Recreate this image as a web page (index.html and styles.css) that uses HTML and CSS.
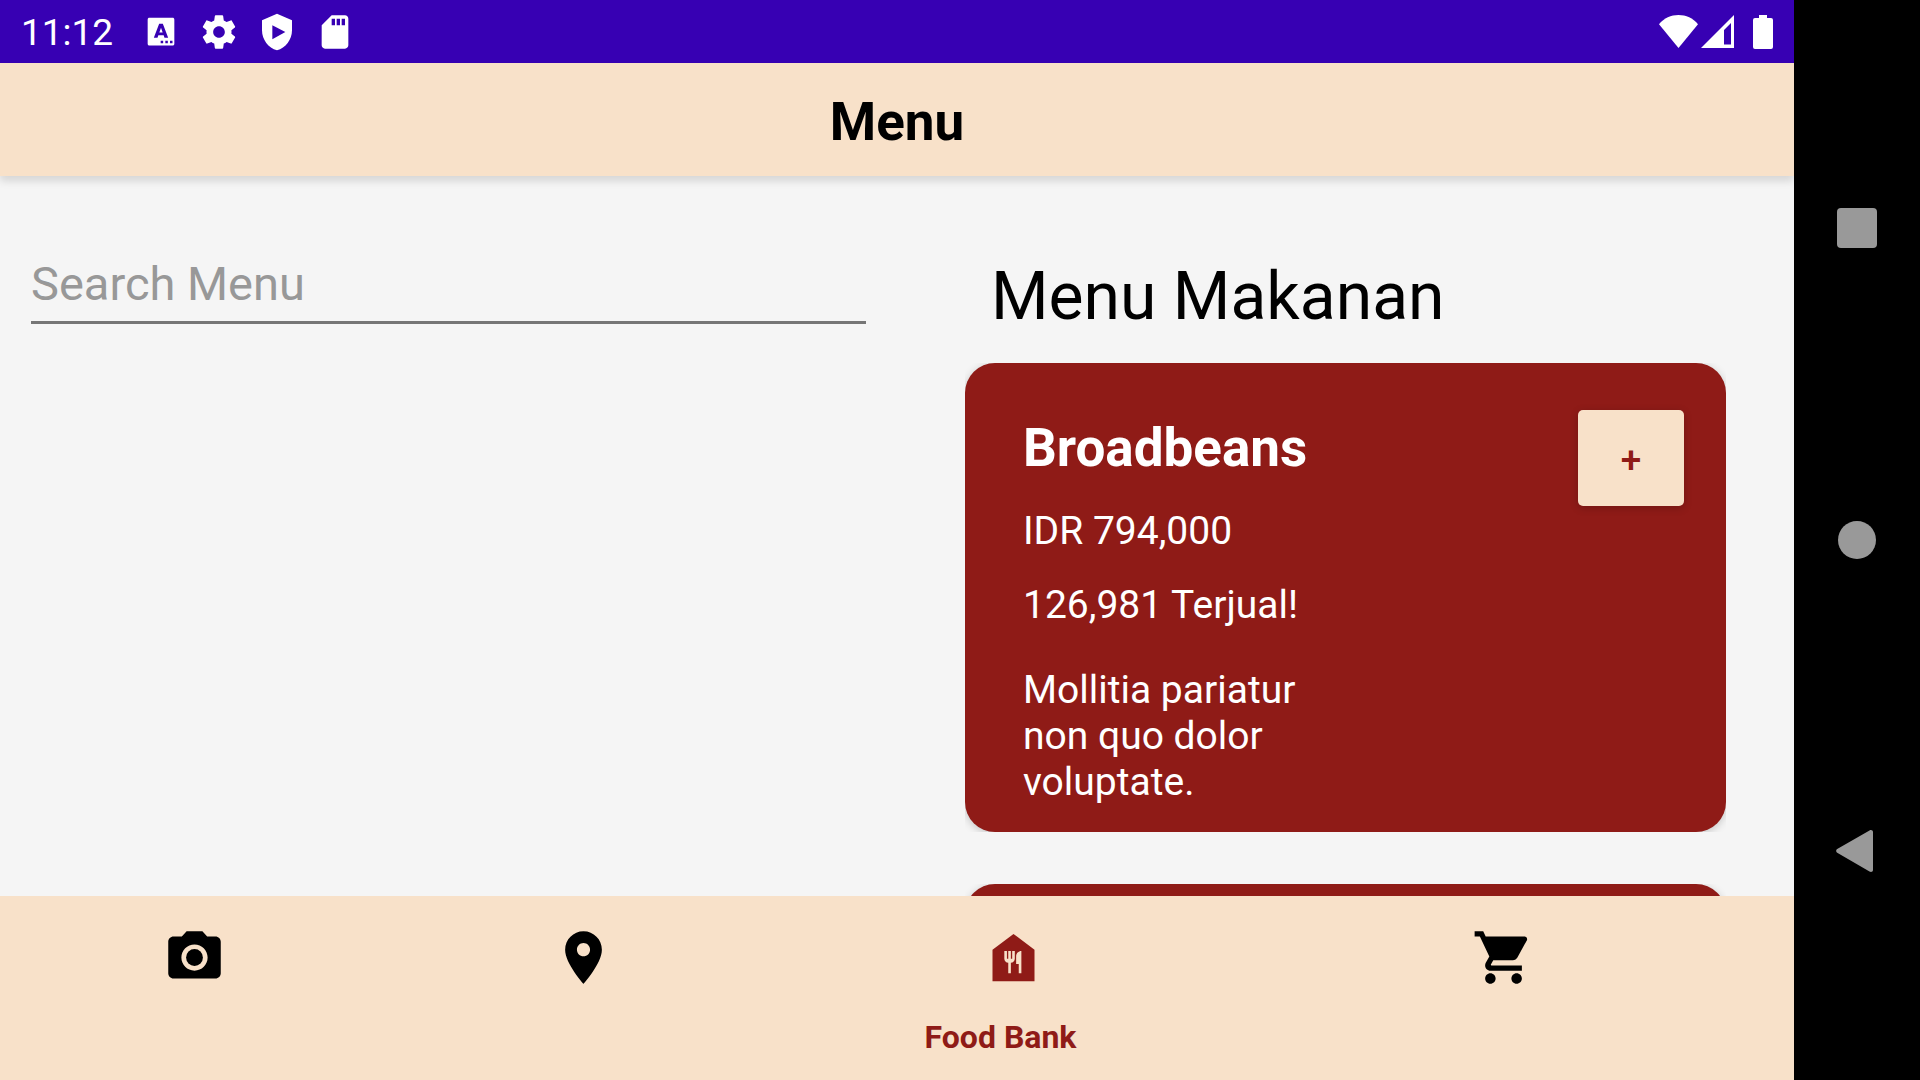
FILE: index.html
```html
<!DOCTYPE html>
<html lang="id">
<head>
  <meta charset="utf-8">
  <meta name="viewport" content="width=device-width, initial-scale=1">
  <title>Menu</title>
  <link rel="stylesheet" href="styles.css">
</head>
<body>
  <div class="device">
    <div class="app">
      <div class="status-bar">
        <time class="clock">11:12</time>
        <div class="status-icons">
          <svg class="status-icon" viewBox="0 0 24 24"><path fill-rule="evenodd" d="M5.100 3.500h13.800c.7 0 1.100.4 1.100 1.100v14.400c0 .7-.4 1.100-1.100 1.100H5.100c-.7 0-1.100-.4-1.100-1.100V4.600c0-.7.4-1.100 1.100-1.100zM10.900 7 7.700 15.500h2.200l.5-1.600h3.200l.5 1.600h2.200L13.100 7zM12 9.400l1 2.900h-2zM11.800 17.300v1.500h1.500v-1.500zM14.600 17.300v1.500h1.500v-1.500zM17.400 17.300v1.500h1.500v-1.500z"/></svg>
          <svg class="status-icon" viewBox="0 0 24 24"><path d="M19.430 12.980c.04-.32.07-.64.07-.98s-.03-.66-.07-.98l2.110-1.650c.19-.15.24-.42.12-.64l-2-3.460c-.12-.22-.39-.3-.61-.22l-2.490 1c-.52-.4-1.080-.73-1.690-.98l-.38-2.650C14.460 2.180 14.250 2 14 2h-4c-.25 0-.46.18-.49.42l-.38 2.650c-.61.25-1.170.59-1.690.98l-2.490-1c-.23-.09-.49 0-.61.22l-2 3.460c-.13.22-.07.49.12.64l2.110 1.650c-.04.32-.07.65-.07.98s.03.66.07.98l-2.110 1.650c-.19.15-.24.42-.12.64l2 3.460c.12.22.39.3.61.22l2.490-1c.52.4 1.080.73 1.690.98l.38 2.650c.03.24.24.42.49.42h4c.25 0 .46-.18.49-.42l.38-2.650c.61-.25 1.170-.59 1.690-.98l2.490 1c.23.09.49 0 .61-.22l2-3.460c.12-.22.07-.49-.12-.64l-2.110-1.650zM12 15.500c-1.930 0-3.500-1.570-3.500-3.500s1.570-3.500 3.500-3.500 3.500 1.570 3.500 3.500-1.570 3.500-3.500 3.500z"/></svg>
          <svg class="status-icon" viewBox="0 0 24 24"><path fill-rule="evenodd" d="M12 1 3 5v6c0 5.550 3.840 10.740 9 12 5.160-1.260 9-6.450 9-12V5l-9-4zM9.200 7.900 17 12l-7.800 4.300z"/></svg>
          <svg class="status-icon" viewBox="0 0 24 24"><path d="M18 2h-8L4.020 8 4 20c0 1.100.9 2 2 2h12c1.100 0 2-.9 2-2V4c0-1.100-.9-2-2-2zm-6 6h-2V4h2v4zm3 0h-2V4h2v4zm3 0h-2V4h2v4z"/></svg>
        </div>
        <div class="system-icons">
          <svg class="wifi" viewBox="0 0 39 33"><path d="M19.500 33 0 9.200C5 3 12 0 19.500 0S34 3 39 9.200z"/></svg>
          <svg class="signal" viewBox="0 0 33 33"><path fill-rule="evenodd" d="M33 0v33H0zM30 8l-7 7v14.500h7z"/></svg>
          <svg class="battery" viewBox="0 0 20 34"><path d="M6 0h8v3h4a2 2 0 0 1 2 2v27a2 2 0 0 1-2 2H2a2 2 0 0 1-2-2V5a2 2 0 0 1 2-2h4z"/></svg>
        </div>
      </div>

      <header class="toolbar">
        <h1 class="toolbar-title">Menu</h1>
      </header>

      <main class="content">
        <form class="search">
          <input class="search-input" type="text" placeholder="Search Menu" aria-label="Search Menu">
        </form>
        <section class="menu">
          <h2 class="menu-title">Menu Makanan</h2>
          <ul class="menu-list">
            <li class="menu-item">
              <article class="card">
                <div class="card-text">
                  <h3 class="card-name">Broadbeans</h3>
                  <p class="card-price">IDR 794,000</p>
                  <p class="card-sold">126,981 Terjual!</p>
                  <p class="card-description">Mollitia pariatur non quo dolor voluptate.</p>
                </div>
                <button class="add-button" type="button">+</button>
              </article>
            </li>
            <li class="menu-item">
              <article class="card"></article>
            </li>
          </ul>
        </section>
      </main>

      <nav class="tabs">
        <a class="tab" href="#camera" aria-label="Camera">
          <svg class="tab-icon" viewBox="0 0 24 24"><circle cx="12" cy="12" r="3.200"/><path d="M9 2 7.170 4H4c-1.100 0-2 .9-2 2v12c0 1.100.9 2 2 2h16c1.100 0 2-.9 2-2V6c0-1.100-.9-2-2-2h-3.170L15 2H9zm3 15c-2.760 0-5-2.240-5-5s2.240-5 5-5 5 2.240 5 5-2.240 5-5 5z"/></svg>
        </a>
        <a class="tab" href="#location" aria-label="Location">
          <svg class="tab-icon" viewBox="0 0 24 24"><path d="M12 2C8.130 2 5 5.130 5 9c0 5.250 7 13 7 13s7-7.750 7-13c0-3.870-3.130-7-7-7zm0 9.500c-1.380 0-2.500-1.120-2.500-2.500s1.120-2.500 2.500-2.500 2.500 1.120 2.500 2.500-1.120 2.500-2.500 2.500z"/></svg>
        </a>
        <a class="tab tab-active" href="#food-bank" aria-current="page">
          <svg class="tab-icon" viewBox="0 0 24 24"><path fill-rule="evenodd" d="M12 3 4 9v12h16V9zM12.500 12.500c0 .83-.67 1.500-1.500 1.500v4h-1v-4c-.83 0-1.500-.67-1.500-1.500v-3h1v3h.5v-3h1v3h.5v-3h1zM15 18h-1v-3.500h-1v-3c0-1.100.9-2 2-2z"/></svg>
          <span class="tab-label">Food Bank</span>
        </a>
        <a class="tab" href="#cart" aria-label="Cart">
          <svg class="tab-icon" viewBox="0 0 24 24"><path d="M7 18c-1.100 0-1.990.9-1.990 2S5.900 22 7 22s2-.9 2-2-.9-2-2-2zM1 2v2h2l3.600 7.590-1.350 2.450c-.16.28-.25.61-.25.96 0 1.100.9 2 2 2h12v-2H7.420c-.14 0-.25-.11-.25-.25l.03-.12.9-1.630h7.450c.75 0 1.410-.41 1.750-1.030l3.580-6.490c.08-.14.12-.31.12-.48 0-.55-.45-1-1-1H5.210l-.94-2H1zm16 16c-1.100 0-1.990.9-1.990 2s.89 2 1.990 2 2-.9 2-2-.9-2-2-2z"/></svg>
        </a>
      </nav>
    </div>

    <div class="system-nav">
      <button class="system-button" type="button" aria-label="Recent apps"><svg class="system-glyph" viewBox="0 0 42 42"><rect x="1" y="1" width="40" height="40" rx="4"/></svg></button>
      <button class="system-button" type="button" aria-label="Home"><svg class="system-glyph" viewBox="0 0 42 42"><circle cx="21" cy="21" r="19"/></svg></button>
      <button class="system-button" type="button" aria-label="Back"><svg class="system-glyph" viewBox="0 0 42 42"><path d="M1.200 18 33.500-.6C35.200-1.500 37-.7 37 1v38c0 1.700-1.800 2.500-3.500 1.600L1.200 21.700C-.2 20.900-.2 18.800 1.200 18z"/></svg></button>
    </div>
  </div>
</body>
</html>
```

FILE: styles.css
```css
:root {
  --cream: #f8e1c9;
  --maroon: #8f1b17;
  --surface: #f5f5f5;
  --indigo: #3700b3;
}

* {
  box-sizing: border-box;
  margin: 0;
  padding: 0;
}

body {
  font-family: Roboto, "Liberation Sans", sans-serif;
  color: #000;
  background: #000;
}

button,
input {
  font: inherit;
  border: 0;
  background: none;
}

svg {
  display: block;
  fill: currentColor;
  overflow: visible;
}

.device {
  display: flex;
  height: 100vh;
}

.app {
  flex: 1;
  min-width: 0;
  display: flex;
  flex-direction: column;
  background: var(--surface);
}

/* Status bar */

.status-bar {
  flex: none;
  display: flex;
  align-items: center;
  height: 63px;
  padding: 0 21px;
  color: #fff;
  background: var(--indigo);
}

.clock {
  padding-top: 2px;
  font-size: 37px;
  line-height: 44px;
}

.status-icons {
  display: flex;
  gap: 18px;
  margin-left: 28px;
}

.status-icon {
  width: 40px;
  height: 40px;
}

.system-icons {
  display: flex;
  align-items: center;
  margin-left: auto;
}

.wifi {
  width: 39px;
  height: 33px;
}

.signal {
  width: 33px;
  height: 33px;
  margin-left: 3px;
}

.battery {
  width: 20px;
  height: 34px;
  margin-left: 19px;
}

/* Toolbar */

.toolbar {
  flex: none;
  position: relative;
  z-index: 1;
  padding: 28px 0 23px;
  text-align: center;
  background: var(--cream);
  box-shadow: 0 5px 8px rgba(0, 0, 0, 0.13);
}

.toolbar-title {
  font-size: 53px;
  line-height: 62px;
  font-weight: 700;
}

/* Content */

.content {
  flex: 1;
  min-height: 0;
  overflow: hidden;
  display: grid;
  grid-template-columns: 1fr 1fr;
}

.search {
  padding: 72px 31px;
}

.search-input {
  display: block;
  width: 100%;
  height: 76px;
  padding-bottom: 2px;
  font-size: 47px;
  border-bottom: 3px solid #767676;
  outline: none;
}

.search-input::placeholder {
  color: #989898;
  opacity: 1;
}

.menu {
  padding: 82px 68px 0;
}

.menu-title {
  padding-left: 26px;
  font-size: 66px;
  line-height: 78px;
  font-weight: 400;
}

.menu-list {
  display: grid;
  gap: 52px;
  margin-top: 27px;
  list-style: none;
}

/* The row clips the card's shadow, leaving it in the corners only. */
.menu-item {
  overflow: hidden;
}

.card {
  display: flex;
  justify-content: space-between;
  align-items: flex-start;
  min-height: 469px;
  padding: 47px 42px 26px 58px;
  color: #fff;
  background: var(--maroon);
  border-radius: 30px;
  box-shadow: 0 2px 8px rgba(0, 0, 0, 0.2);
}

.card-text {
  width: 300px;
  padding-top: 7px;
  font-size: 39px;
  line-height: 46px;
}

.card-name {
  font-size: 53px;
  line-height: 62px;
  font-weight: 700;
}

.card-price {
  margin-top: 29px;
}

.card-sold {
  margin-top: 28px;
}

.card-description {
  margin-top: 39px;
}

.add-button {
  width: 106px;
  height: 96px;
  padding-top: 4px;
  font-size: 37px;
  font-weight: 500;
  color: var(--maroon);
  background: var(--cream);
  border-radius: 5px;
  box-shadow: 0 2px 8px rgba(0, 0, 0, 0.2);
}

/* Bottom tabs */

.tabs {
  flex: none;
  display: grid;
  grid-template-columns: 389fr 389fr 445fr 561fr;
  height: 184px;
  padding-right: 10px;
  background: var(--cream);
}

.tab {
  display: flex;
  flex-direction: column;
  align-items: center;
  gap: 29px;
  padding-top: 30px;
  color: #000;
  text-decoration: none;
}

.tab-active {
  color: var(--maroon);
}

.tab-icon {
  width: 63px;
  height: 63px;
}

.tab-active .tab-icon {
  margin-left: 26px;
}

.tab-label {
  font-size: 32px;
  line-height: 38px;
  font-weight: 700;
}

/* System navigation */

.system-nav {
  flex: none;
  display: flex;
  flex-direction: column;
  justify-content: space-around;
  width: 126px;
  padding: 72px 0;
  background: #000;
}

.system-button {
  display: flex;
  justify-content: center;
  color: #999;
}

.system-glyph {
  width: 42px;
  height: 42px;
}
```
